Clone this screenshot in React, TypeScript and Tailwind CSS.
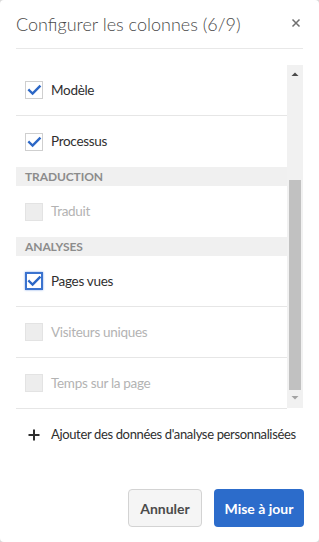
import React from "react";

type Item = { label: string; state: "checked" | "focused" | "disabled" };

const CheckPath = () => (
  <path d="M4.2 9.3 L7.6 12.6 L14.6 5.4" fill="none" stroke="#2c67c6" strokeWidth="2.4" strokeLinecap="square" />
);

function Row({ item, border = true }: { item: Item; border?: boolean }) {
  const disabled = item.state === "disabled";
  let box = "border border-[#cfcfcf] bg-white";
  if (item.state === "focused") box = "border-2 border-[#3b73cf] bg-white shadow-[0_0_2px_#7fa5e6]";
  if (disabled) box = "border border-[#e3e3e3] bg-[#ededed]";
  return (
    <div className={`flex h-[51px] items-center pl-[9px] ${border ? "border-b border-[#e6e6e6]" : ""}`}>
      <div className={`relative h-[18px] w-[18px] ${box}`}>
        {disabled ? null : item.state === "focused" ? (
          <svg width="18" height="18" viewBox="0 0 18 18" className="absolute left-[-2px] top-[-2px]">
            <CheckPath />
          </svg>
        ) : (
          <svg width="18" height="18" viewBox="0 0 18 18" className="absolute left-[-1px] top-[-1px]">
            <CheckPath />
          </svg>
        )}
      </div>
      <span className={`ml-[8px] text-[13.5px] tracking-[-0.3px] ${disabled ? "text-[#b3b3b3]" : "text-[#2f2f2f]"}`}>
        {item.label}
      </span>
    </div>
  );
}

function Header({ label }: { label: string }) {
  return (
    <div className="flex h-[19px] items-center bg-[#f0f0f0] pl-[9px] text-[12px] font-bold tracking-[-0.1px] text-[#8c8c8c]">
      {label}
    </div>
  );
}

export default function App() {
  return (
    <div className="bg-[#d9d9d9]" style={{ fontFamily: "Lato, 'Open Sans', sans-serif" }}>
      <div className="flex h-[542px] w-[319px] flex-col rounded-[4px] bg-white">
        <div className="mx-[16px] flex h-[49px] items-center justify-between border-b border-[#e8e8e8] pt-[1px]">
          <h1 className="text-[18px] font-light text-[#4a4a4a]">Configurer les colonnes (6/9)</h1>
          <svg width="10" height="10" viewBox="0 0 10 10" className="mr-[2px] mb-[4px]">
            <path d="M1.5 1.5 L8.5 8.5 M8.5 1.5 L1.5 8.5" stroke="#6f6f6f" strokeWidth="1.5" />
          </svg>
        </div>
        <div className="mx-[16px] mt-[16px] flex h-[344px] overflow-hidden">
          <div className="flex-1">
            <Row item={{ label: "Modèle", state: "checked" }} />
            <Row item={{ label: "Processus", state: "checked" }} border={false} />
            <Header label="TRADUCTION" />
            <Row item={{ label: "Traduit", state: "disabled" }} border={false} />
            <Header label="ANALYSES" />
            <Row item={{ label: "Pages vues", state: "focused" }} />
            <Row item={{ label: "Visiteurs uniques", state: "disabled" }} />
            <Row item={{ label: "Temps sur la page", state: "disabled" }} />
          </div>
          <div className="flex h-[343px] w-[16px] flex-col items-center bg-[#f1f1f1]">
            <svg width="8" height="6" viewBox="0 0 8 6" className="mt-[6px]">
              <path d="M0.5 5 L4 1.5 L7.5 5 Z" fill="#4a4a4a" />
            </svg>
            <div className="mt-[103px] h-[210px] w-[12px] bg-[#c1c1c1]" />
            <svg width="8" height="6" viewBox="0 0 8 6" className="mt-[5px]">
              <path d="M0.5 1 L4 4.5 L7.5 1 Z" fill="#a3a3a3" />
            </svg>
          </div>
        </div>
        <div className="flex h-[52px] items-center pl-[28px] text-[#2f2f2f]">
          <svg width="12" height="12" viewBox="0 0 12 12">
            <path d="M6 0.5 V11.5 M0.5 6 H11.5" stroke="#2f2f2f" strokeWidth="2" />
          </svg>
          <span className="ml-[11px] whitespace-nowrap text-[13px] tracking-[-0.35px]">
            Ajouter des données d'analyse personnalisées
          </span>
        </div>
        <div className="mt-auto flex justify-end gap-[12px] pb-[15px] pr-[15px]">
          <button className="h-[38px] w-[74px] rounded-[4px] border border-[#d3d3d3] bg-[#f5f5f5] text-[14px] font-bold text-[#4b4b4b]">
            Annuler
          </button>
          <button className="h-[38px] w-[90px] rounded-[4px] bg-[#2c6ccb] text-[14px] font-bold text-white">
            Mise à jour
          </button>
        </div>
      </div>
    </div>
  );
}
